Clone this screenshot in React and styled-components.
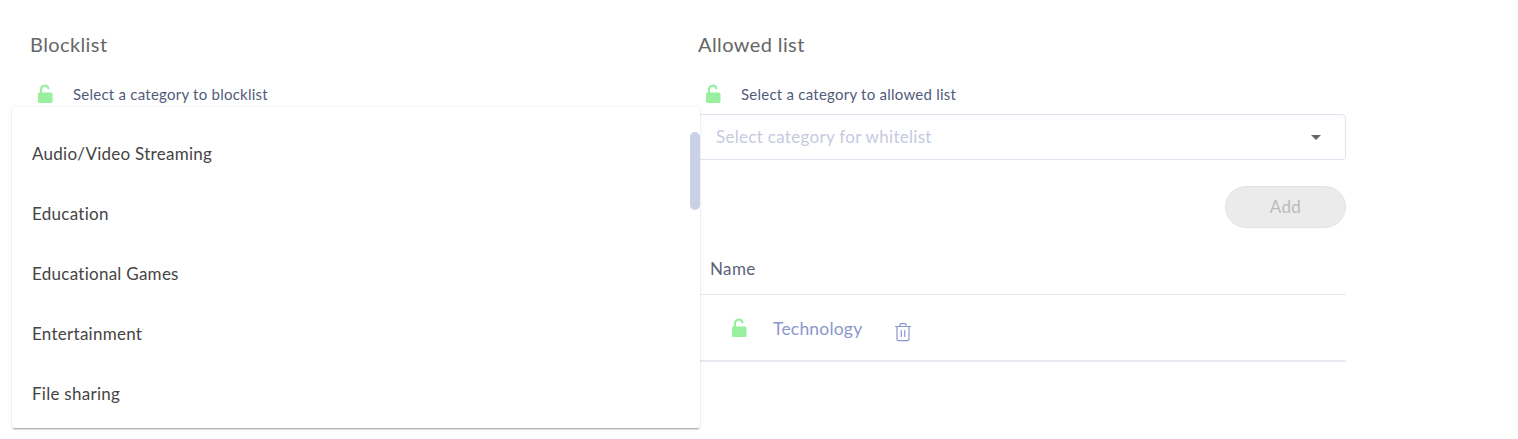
import React from 'react';
import styled, { createGlobalStyle } from 'styled-components';

const GlobalStyle = createGlobalStyle`
  html, body {
    margin: 0;
    background: #fff;
    font-family: Lato, "Open Sans", sans-serif;
  }
`;

const Page = styled.div`
  display: grid;
  grid-template-columns: 648px 648px;
  column-gap: 20px;
  align-content: start;
  box-sizing: border-box;
  min-height: 100vh;
  padding: 32px 0 0 30px;
`;

const Column = styled.section`
  display: flex;
  flex-direction: column;
  position: relative;
  z-index: ${(p) => (p.$raised ? 2 : 1)};
`;

const Title = styled.h2`
  margin: 0;
  font-size: 20px;
  line-height: 24px;
  font-weight: 400;
  letter-spacing: 0.4px;
  color: #666;
`;

const Hint = styled.div`
  display: flex;
  align-items: center;
  gap: 20px;
  height: 24px;
  margin-top: 26px;
  padding-left: 7px;
  font-size: 15px;
  letter-spacing: 0.24px;
  color: #525a7a;
`;

const SelectBox = styled.div`
  position: relative;
  display: flex;
  align-items: center;
  justify-content: space-between;
  box-sizing: border-box;
  height: 46px;
  margin-top: 8px;
  padding: 0 24px 2px 17px;
  border: 1px solid #e0e2ef;
  border-radius: 4px;
  font-size: 17px;
  letter-spacing: 0.3px;
  color: #c6cadf;
`;

const Caret = styled.span`
  width: 0;
  height: 0;
  margin-top: 2px;
  border-left: 5px solid transparent;
  border-right: 5px solid transparent;
  border-top: 5px solid #666;
`;

const Menu = styled.div`
  position: absolute;
  top: 75px;
  left: -18px;
  width: 688px;
  height: 321px;
  overflow: hidden;
  box-sizing: border-box;
  padding-top: 16px;
  background: #fff;
  border-radius: 2px;
  box-shadow: 0 2px 2px -1px rgba(0, 0, 0, 0.38), 0 0 3px rgba(0, 0, 0, 0.1);
`;

const MenuItem = styled.div`
  display: flex;
  align-items: center;
  height: 60px;
  padding-left: 20px;
  font-size: 17px;
  letter-spacing: 0.27px;
  color: #444;
`;

const Scrollbar = styled.div`
  position: absolute;
  top: 25px;
  right: 0;
  width: 10px;
  height: 78px;
  border-radius: 5px;
  background: #c8d1e5;
`;

const Actions = styled.div`
  display: flex;
  justify-content: flex-end;
  margin-top: 26px;
`;

const AddButton = styled.button`
  width: 121px;
  height: 42px;
  padding: 0 0 2px;
  border: 1px solid #e4e4e4;
  border-radius: 21px;
  background: #ebebeb;
  font-family: inherit;
  font-size: 17px;
  letter-spacing: 0.4px;
  color: #bbb;
`;

const TableHead = styled.div`
  display: flex;
  align-items: center;
  box-sizing: border-box;
  height: 67px;
  padding: 14px 0 0 12px;
  border-bottom: 1px solid #e8e9f1;
  font-size: 17px;
  letter-spacing: 0.4px;
  color: #5c6178;
`;

const TableRow = styled.div`
  display: flex;
  align-items: center;
  box-sizing: border-box;
  height: 67px;
  padding-left: 33px;
  border-bottom: 2px solid #e8e9f1;
`;

const RowName = styled.span`
  margin-left: 26px;
  padding-top: 2px;
  font-size: 17.5px;
  letter-spacing: 0.2px;
  color: #8a98cc;
`;

const TrashButton = styled.span`
  display: flex;
  margin: 8px 0 0 32px;
`;

const LockIcon = () => (
  <svg width="16" height="20" viewBox="0 0 16 20" fill="none">
    <path d="M4 9V5.5a3.8 3.8 0 0 1 7.4-1.2" stroke="#98f09f" strokeWidth="2.2" strokeLinecap="round" />
    <rect x="1" y="8.5" width="14.5" height="10.5" rx="1.5" fill="#98f09f" />
  </svg>
);

const TrashIcon = () => (
  <svg width="18" height="20" viewBox="0 0 18 20" fill="none" stroke="#8a98cc" strokeWidth="1.2" strokeLinecap="round" strokeLinejoin="round">
    <path d="M1.5 4.5h15M6 4.5V2.8c0-.7.5-1.2 1.2-1.2h3.6c.7 0 1.2.5 1.2 1.2v1.7" />
    <path d="M3 4.5V17c0 1 .7 1.7 1.7 1.7h8.6c1 0 1.7-.7 1.7-1.7V4.5" />
    <path d="M7.3 8.5v6M10.7 8.5v6" />
  </svg>
);

const categories = ['Audio/Video Streaming', 'Education', 'Educational Games', 'Entertainment', 'File sharing'];

export default function App() {
  return (
    <>
      <GlobalStyle />
      <Page>
        <Column $raised>
          <Title>Blocklist</Title>
          <Hint>
            <LockIcon />
            Select a category to blocklist
          </Hint>
          <Menu>
            {categories.map((c) => (
              <MenuItem key={c}>{c}</MenuItem>
            ))}
            <Scrollbar />
          </Menu>
        </Column>
        <Column>
          <Title>Allowed list</Title>
          <Hint>
            <LockIcon />
            Select a category to allowed list
          </Hint>
          <SelectBox>
            Select category for whitelist
            <Caret />
          </SelectBox>
          <Actions>
            <AddButton disabled>Add</AddButton>
          </Actions>
          <TableHead>Name</TableHead>
          <TableRow>
            <LockIcon />
            <RowName>Technology</RowName>
            <TrashButton>
              <TrashIcon />
            </TrashButton>
          </TableRow>
        </Column>
      </Page>
    </>
  );
}
